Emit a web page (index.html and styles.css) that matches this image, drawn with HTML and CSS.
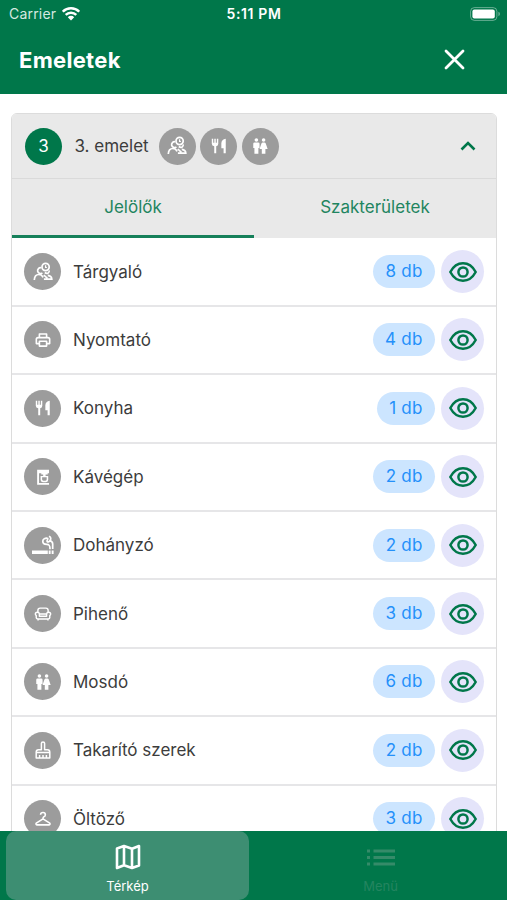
FILE: index.html
```
<!DOCTYPE html>
<html lang="hu">
<head>
  <meta charset="UTF-8" />
  <meta name="viewport" content="width=device-width, initial-scale=1.0"/>
  <title>Emeletek</title>
  <link rel="stylesheet" href="styles.css">
</head>
<body>

  <!-- icons -->
  <svg class="sprite" width="0" height="0">
    <symbol id="i-meeting" viewBox="0 0 20 20">
      <g fill="none" stroke="currentColor" stroke-width="1.7">
        <circle cx="12.6" cy="5" r="3.6"/>
        <path d="M12.600 3.200v2.300h1.300" stroke-width="1.200"/>
        <path d="M8.200 5.800a2.900 2.900 0 1 0 1.200 5M1.300 18c.2-3.800 1.900-5.500 4.500-5.500 2.200 0 3.500 1.100 4.300 2.900M16.200 8.500c.4 2.600-2.200 3.800-4.400 2M10.900 17.100h7.900c-.1-2.400-1.800-3.300-4-3.700M10.800 13l3.600 3.400"/>
      </g>
    </symbol>
    <symbol id="i-printer" viewBox="0 0 20 20">
      <g fill="none" stroke="currentColor" stroke-width="1.8" stroke-linejoin="round">
        <path d="M6 7V3.300h8V7M6 14H2.600V9.200Q2.600 7.300 4.500 7.300h11q1.900 0 1.900 1.900V14H14"/>
        <path d="M6 11.400h8v5.400H6z"/>
      </g>
    </symbol>
    <symbol id="i-food" viewBox="0 0 20 20">
      <path fill="currentColor" d="M2 2h1.600v4.500h1.200V2h1.600v4.500h1.200V2h1.600v5.500q0 2.300-2.300 2.900V18H4.700v-7.600Q2 9.800 2 7.500zM17.500 2v16h-2.400v-5.500h-2.500V7q.2-4.400 4.900-5z"/>
    </symbol>
    <symbol id="i-wc" viewBox="0 0 20 20">
      <circle cx="6" cy="3.300" r="2" fill="currentColor"/>
      <circle cx="14" cy="3.300" r="2" fill="currentColor"/>
      <path fill="currentColor" d="M4 6.100h4q1.500 0 1.500 1.500v4.700H8.200V18.500H3.800v-6.200H2.500V7.600Q2.500 6.100 4 6.100zM13.200 6.100h1.600q1.200 0 1.600 1.200l2.100 5.900H16v5.300h-4v-5.300H9.500l2.100-5.900q.4-1.200 1.600-1.200z"/>
    </symbol>
    <symbol id="i-coffee" viewBox="0 0 20 20">
      <path fill="currentColor" d="M3.500 2h13.200v3.800h-1.500v1.500H8.100V5.800H5.600v10.800h11.100V18.500H3.500zM7.300 8.800h8.500v4.200q0 2.700-2.500 2.700H9.800Q7.300 15.700 7.300 13zm1.700 1.600v2.100q0 1.600 1.400 1.600h2.300q1.400 0 1.400-1.600v-2.100zM10.200 7.300h2.700v2h-2.700z"/>
    </symbol>
    <symbol id="i-smoke" viewBox="0 0 24 20">
      <path fill="currentColor" d="M1 15.500h15.800V19H1zM17.700 15.500h1.900V19h-1.900zM20.700 15.500h1.900V19h-1.900z"/>
      <path fill="none" stroke="currentColor" stroke-width="1.700" d="M18 1.300c2 1 2.300 2.500 1 4.300 2.200.8 2.700 2 2.700 3.400v5M16.500 3.200c-2.800-.3-4.700 1-4.700 3s1.700 3.100 4 3.100c2.500 0 3.200 1 3.200 4.900M16.500 3.200c1.400 1.200-1.400 2.300-.3 3.400.8.700 2.800 0 2.800-.8"/>
    </symbol>
    <symbol id="i-sofa" viewBox="0 0 20 20">
      <g fill="none" stroke="currentColor" stroke-width="1.600" stroke-linejoin="round">
        <path d="M4.300 8V6q0-2.500 2.500-2.500h6.400q2.500 0 2.500 2.500v2"/>
        <path d="M6 12.500V10q-.2-2-2.300-2-2.200 0-2.200 2 0 1 1 1.700v2.600q0 1.200 1.700 1.200h11.600q1.700 0 1.700-1.200v-2.600q1-.7 1-1.700 0-2-2.200-2-2.100 0-2.300 2v2.500zM6 10h8M4.500 15.500v1.800M15.500 15.500v1.800"/>
      </g>
    </symbol>
    <symbol id="i-brush" viewBox="0 0 20 20">
      <g fill="none" stroke="currentColor" stroke-width="1.500" stroke-linejoin="round">
        <path d="M8.400 9.800V3.200q0-1.200 1.600-1.200t1.600 1.200v6.600h2.900q2.300 0 2.300 2.400v5.800H3.200v-5.800q0-2.400 2.300-2.400zM3.400 12.400h13.200M6.600 18v-3M10 18v-3M13.400 18v-3"/>
      </g>
    </symbol>
    <symbol id="i-hanger" viewBox="0 0 20 20">
      <path fill="none" stroke="currentColor" stroke-width="1.800" stroke-linejoin="round" d="M7.300 5.300q0-2.500 2.700-2.500 2.600 0 2.600 2.400 0 1.800-1.600 2.400-1 .4-1 2.200l7.500 4.800q.9 1.500-.8 1.900H3.300q-1.700-.4-.8-1.900L10 9.800"/>
    </symbol>
    <symbol id="i-eye" viewBox="0 0 28 20">
      <path fill="none" stroke="currentColor" stroke-width="2.500" stroke-linejoin="round" d="M1.300 10Q6 1.300 14 1.300T26.700 10Q22 18.700 14 18.700T1.300 10z"/>
      <circle cx="14" cy="10" r="4.600" fill="none" stroke="currentColor" stroke-width="2.500"/>
    </symbol>
  </svg>

  <div class="status-bar">
    <div class="carrier">Carrier
      <svg width="18" height="14" viewBox="0 0 18 14">
        <g fill="none" stroke="#fff" stroke-width="2.400">
          <path d="M.8 4.700a11.600 11.600 0 0 1 16.400 0M3.700 7.900a7.500 7.500 0 0 1 10.600 0"/>
        </g>
        <path fill="#fff" d="M5.800 10.200a4.500 4.500 0 0 1 6.400 0L9 13.600z"/>
      </svg>
    </div>
    <div class="clock">5:11 PM</div>
    <div class="battery">
      <svg width="31" height="14" viewBox="0 0 31 14">
        <rect x=".6" y=".6" width="26.300" height="12.800" rx="3.800" fill="none" stroke="#fff" stroke-opacity=".4"/>
        <rect x="2.400" y="2.400" width="22.400" height="9.200" rx="2" fill="#fff"/>
        <path d="M28.400 4.800q1.600.6 1.600 2.200t-1.600 2.200z" fill="#fff" fill-opacity=".4"/>
      </svg>
    </div>
  </div>

  <header class="header">
    <h1>Emeletek</h1>
    <svg class="close" width="21" height="21" viewBox="0 0 21 21"><path d="M2 2l17 17M19 2L2 19"/></svg>
  </header>

  <main class="content">
    <div class="floor-card">
      <div class="floor-head">
        <span class="floor-number">3</span>
        <span class="floor-name">3. emelet</span>
        <div class="floor-icons">
          <span class="marker"><svg><use href="#i-meeting"/></svg></span>
          <span class="marker"><svg class="small"><use href="#i-food"/></svg></span>
          <span class="marker"><svg class="small"><use href="#i-wc"/></svg></span>
        </div>
        <svg class="chevron" width="16" height="10" viewBox="0 0 16 10"><path d="M1.500 8.500L8 2l6.500 6.500"/></svg>
      </div>

      <div class="tabs">
        <div class="tab tab-active">Jelölők</div>
        <div class="tab">Szakterületek</div>
      </div>

      <div class="rows">
        <div class="row">
          <span class="marker"><svg><use href="#i-meeting"/></svg></span>
          <span class="name">Tárgyaló</span>
          <span class="count">8 db</span>
          <span class="eye"><svg><use href="#i-eye"/></svg></span>
        </div>
        <div class="row">
          <span class="marker"><svg class="small"><use href="#i-printer"/></svg></span>
          <span class="name">Nyomtató</span>
          <span class="count">4 db</span>
          <span class="eye"><svg><use href="#i-eye"/></svg></span>
        </div>
        <div class="row">
          <span class="marker"><svg class="small"><use href="#i-food"/></svg></span>
          <span class="name">Konyha</span>
          <span class="count">1 db</span>
          <span class="eye"><svg><use href="#i-eye"/></svg></span>
        </div>
        <div class="row">
          <span class="marker"><svg class="small"><use href="#i-coffee"/></svg></span>
          <span class="name">Kávégép</span>
          <span class="count">2 db</span>
          <span class="eye"><svg><use href="#i-eye"/></svg></span>
        </div>
        <div class="row">
          <span class="marker"><svg class="wide"><use href="#i-smoke"/></svg></span>
          <span class="name">Dohányzó</span>
          <span class="count">2 db</span>
          <span class="eye"><svg><use href="#i-eye"/></svg></span>
        </div>
        <div class="row">
          <span class="marker"><svg class="small"><use href="#i-sofa"/></svg></span>
          <span class="name">Pihenő</span>
          <span class="count">3 db</span>
          <span class="eye"><svg><use href="#i-eye"/></svg></span>
        </div>
        <div class="row">
          <span class="marker"><svg class="small"><use href="#i-wc"/></svg></span>
          <span class="name">Mosdó</span>
          <span class="count">6 db</span>
          <span class="eye"><svg><use href="#i-eye"/></svg></span>
        </div>
        <div class="row">
          <span class="marker"><svg><use href="#i-brush"/></svg></span>
          <span class="name">Takarító szerek</span>
          <span class="count">2 db</span>
          <span class="eye"><svg><use href="#i-eye"/></svg></span>
        </div>
        <div class="row">
          <span class="marker"><svg class="small"><use href="#i-hanger"/></svg></span>
          <span class="name">Öltöző</span>
          <span class="count">3 db</span>
          <span class="eye"><svg><use href="#i-eye"/></svg></span>
        </div>
      </div>
    </div>
  </main>

  <nav class="bottom-nav">
    <div class="nav-item nav-active">
      <svg width="26" height="26" viewBox="0 0 26 26">
        <path fill="none" stroke="currentColor" stroke-width="2.600" stroke-linejoin="round" d="M2 4.500L9 2l8 2.800L24 2v19.500L17 24l-8-2.800L2 24zM9 2v19.200M17 4.800V24"/>
      </svg>
      <span>Térkép</span>
    </div>
    <div class="nav-item">
      <svg width="28" height="26" viewBox="0 0 28 26">
        <path fill="currentColor" d="M0 5.500h3v3H0zM6.500 5.500H28v3H6.500zM0 12h3v3H0zM6.500 12H28v3H6.500zM0 18.500h3v3H0zM6.500 18.500H28v3H6.500z"/>
      </svg>
      <span>Menü</span>
    </div>
  </nav>

</body>
</html>
```
FILE: styles.css
```
* {
  box-sizing: border-box;
}
body {
  margin: 0;
  height: 900px;
  display: flex;
  flex-direction: column;
  overflow: hidden;
  font-family: Inter, "Liberation Sans", sans-serif;
  background-color: #fff;
  color: #3c3c3c;
}
svg {
  display: block;
  flex: none;
}
.sprite {
  position: absolute;
}
.status-bar {
  display: grid;
  grid-template-columns: 1fr auto 1fr;
  align-items: center;
  height: 27px;
  padding: 0 6px 0 9px;
  background-color: #00774a;
  color: #fff;
  font-size: 14px;
}
.carrier {
  display: flex;
  align-items: center;
  gap: 6px;
  color: #d5e9e0;
  letter-spacing: 0.2px;
}
.clock {
  margin-right: 2px;
  font-weight: 600;
  letter-spacing: 0.6px;
}
.battery {
  justify-self: end;
}
.header {
  display: flex;
  align-items: center;
  justify-content: space-between;
  height: 67px;
  flex: none;
  padding: 0 42px 2px 19px;
  background-color: #00774a;
  color: #fff;
}
.header h1 {
  margin: 0;
  font-size: 22px;
  font-weight: 700;
  letter-spacing: 0.3px;
}
.close {
  fill: none;
  stroke: #fff;
  stroke-width: 2.8;
  stroke-linecap: round;
}
.content {
  flex: 1;
  min-height: 0;
  overflow: hidden;
  padding: 19px 10px 0 11px;
}
.floor-card {
  border: 1px solid #dcdcdc;
  border-radius: 6px;
  overflow: hidden;
}
.floor-head {
  display: flex;
  align-items: center;
  height: 65px;
  padding: 0 20px 0 13px;
  background-color: #e9e9e9;
  border-bottom: 1px solid #dadada;
}
.floor-number {
  width: 37px;
  height: 37px;
  line-height: 37px;
  border-radius: 50%;
  background-color: #00774a;
  color: #fff;
  font-size: 17px;
  text-align: center;
}
.floor-name {
  width: 84px;
  margin-left: 12.5px;
  font-size: 17px;
  white-space: nowrap;
}
.floor-icons {
  display: flex;
  gap: 4.5px;
}
.chevron {
  margin-left: auto;
  fill: none;
  stroke: #00774a;
  stroke-width: 2.6;
}
.marker {
  display: flex;
  align-items: center;
  justify-content: center;
  flex: none;
  width: 37px;
  height: 37px;
  border-radius: 50%;
  background-color: #9c9c9c;
  color: #fff;
}
.marker svg {
  width: 20px;
  height: 20px;
}
.marker .small {
  width: 18px;
  height: 18px;
}
.marker .wide {
  width: 24px;
  height: 20px;
}
.tabs {
  display: flex;
  height: 59.4px;
  background-color: #e9e9e9;
}
.tab {
  flex: 1;
  padding-top: 16px;
  line-height: 24px;
  font-size: 17px;
  text-align: center;
  color: #1f8560;
}
.tab-active {
  border-bottom: 3px solid #16805a;
}
.row {
  display: flex;
  align-items: center;
  height: 68.4px;
  padding: 0 12px;
  border-bottom: 2px solid #e6e6e8;
}
.name {
  flex: 1;
  margin-left: 12px;
  font-size: 17px;
}
.count {
  height: 33px;
  line-height: 33px;
  padding: 0 12.5px;
  border-radius: 17px;
  background-color: #cce5ff;
  color: #2490fa;
  font-size: 17px;
  letter-spacing: 0.2px;
}
.eye {
  display: flex;
  align-items: center;
  justify-content: center;
  width: 43px;
  height: 43px;
  margin-left: 6px;
  border-radius: 50%;
  background-color: #e4e4fa;
  color: #00774a;
}
.eye svg {
  width: 28px;
  height: 20px;
}
.bottom-nav {
  display: flex;
  gap: 10px;
  flex: none;
  height: 69px;
  padding: 0 5px 0 6px;
  background-color: #00774a;
}
.nav-item {
  flex: 1;
  display: flex;
  flex-direction: column;
  align-items: center;
  gap: 8px;
  padding-top: 13px;
  border-radius: 10px;
  color: #358b69;
  font-size: 13px;
}
.nav-item span {
  color: #248560;
}
.nav-active {
  background-color: #3d8e72;
  color: #fff;
}
.nav-active span {
  color: #fff;
}
```
